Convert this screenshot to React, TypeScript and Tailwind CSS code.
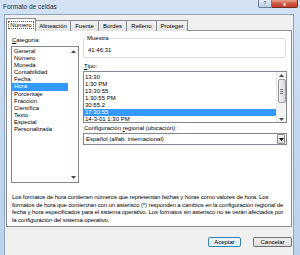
import React from "react";

const categories = [
  "General",
  "Número",
  "Moneda",
  "Contabilidad",
  "Fecha",
  "Hora",
  "Porcentaje",
  "Fracción",
  "Científica",
  "Texto",
  "Especial",
  "Personalizada",
];

const types = [
  "13:30",
  "1:30 PM",
  "13:30:55",
  "1:30:55 PM",
  "30:55.2",
  "17:30:55",
  "14-3-01 1:30 PM",
];

const tabs = [
  { label: "Número", w: "w-[30px]" },
  { label: "Alineación", w: "w-[36px]" },
  { label: "Fuente", w: "w-[29px]" },
  { label: "Bordes", w: "w-[29px]" },
  { label: "Relleno", w: "w-[31px]" },
  { label: "Proteger", w: "w-[32px]" },
];

const ArrowUp = () => (
  <svg width="5" height="3" viewBox="0 0 5 3">
    <path d="M0 3 L2.5 0 L5 3 Z" fill="#4d4d4d" />
  </svg>
);

const ArrowDown = () => (
  <svg width="5" height="3" viewBox="0 0 5 3">
    <path d="M0 0 L2.5 3 L5 0 Z" fill="#4d4d4d" />
  </svg>
);

const App = () => {
  return (
    <div className="w-[300px] h-[255px] overflow-hidden bg-gradient-to-b from-[#d3e3f4] via-[#c3d7ee] to-[#bcd2ec] flex flex-col font-['Liberation_Sans',Arial,sans-serif] text-[6px] leading-[7px] text-black">
      {/* title bar */}
      <div className="h-[14px] flex items-start shrink-0">
        <span className="pl-[3px] pt-[3px] text-[6.5px] text-[#1e2b3c]">
          Formato de celdas
        </span>
        <div className="ml-auto mr-[2px] flex">
          <div className="w-[14px] h-[8px] rounded-bl-[2px] border border-t-0 border-[#6d7f98] bg-gradient-to-b from-[#e6eef8] to-[#bccde2] flex items-center justify-center text-[5px] leading-[5px] text-[#3d4c60]">
            ?
          </div>
          <div className="w-[26px] h-[8px] rounded-br-[2px] border border-l-0 border-t-0 border-[#7a2c24] bg-gradient-to-b from-[#e8a493] via-[#cf5a45] to-[#c43c28] flex items-center justify-center text-[6px] leading-[6px] text-white font-bold">
            x
          </div>
        </div>
      </div>

      {/* client area */}
      <div className="flex-1 ml-[4px] mr-[6px] bg-[#f0f0f0] border-l border-t border-r border-[#8fa6c2] pl-[1px] pr-[1px] pt-[3px] flex flex-col">
        {/* tabs */}
        <div className="flex items-end h-[13px] relative z-10">
          {tabs.map((t, i) =>
            i === 0 ? (
              <div
                key={t.label}
                className={`${t.w} h-[13px] bg-white border border-b-0 border-[#898c95] flex items-center justify-center`}
              >
                <span className="border border-dotted border-[#555] px-[1px] leading-[6px]">
                  {t.label}
                </span>
              </div>
            ) : (
              <div
                key={t.label}
                className={`${t.w} h-[11px] -ml-px bg-gradient-to-b from-[#f2f2f2] to-[#e3e3e3] border border-b-0 border-[#898c95] flex items-center justify-center`}
              >
                {t.label}
              </div>
            ),
          )}
        </div>

        {/* panel */}
        <div className="h-[197px] -mt-px bg-white border border-[#898c95] flex flex-col px-[4px]">
          <div className="flex gap-[4px] pt-[6px]">
            {/* categories */}
            <div className="w-[68px] flex flex-col">
              <span className="h-[9px] pl-[1px]">
                <u>C</u>ategoría:
              </span>
              <div className="h-[137px] border border-[#828790] flex">
                <div className="flex-1 flex flex-col pt-[1px]">
                  {categories.map((c) => (
                    <div
                      key={c}
                      className={`h-[7.1px] pl-[2px] leading-[7px] ${
                        c === "Hora" ? "bg-[#3399ff] text-white" : ""
                      }`}
                    >
                      {c}
                    </div>
                  ))}
                </div>
                <div className="w-[10px] flex flex-col items-center justify-between py-[3px]">
                  <ArrowUp />
                  <ArrowDown />
                </div>
              </div>
            </div>

            {/* right column */}
            <div className="flex-1 flex flex-col">
              <div className="relative h-[20px] mt-[1px] border border-[#dcdcdc] rounded-[2px] mr-[1px]">
                <span className="absolute -top-[4px] left-[2px] bg-white px-[1px]">
                  Muestra
                </span>
                <span className="absolute top-[8px] left-[4px]">41:46:31</span>
              </div>

              <span className="mt-[5px] h-[8px] pl-[1px]">
                <u>T</u>ipo:
              </span>
              <div className="h-[52px] border border-[#828790] flex">
                <div className="flex-1 flex flex-col pt-[2px]">
                  {types.map((t) => (
                    <div
                      key={t}
                      className={`h-[7px] pl-[1px] leading-[7px] ${
                        t === "17:30:55" ? "bg-[#3399ff] text-white" : ""
                      }`}
                    >
                      {t}
                    </div>
                  ))}
                </div>
                <div className="w-[10px] flex flex-col items-center bg-[#f4f4f4] border-l border-[#e8e8e8]">
                  <div className="h-[6px] flex items-center">
                    <ArrowUp />
                  </div>
                  <div className="w-[8px] h-[24px] mt-[1px] rounded-[2px] border border-[#9a9a9a] bg-gradient-to-r from-[#f0f0f0] to-[#dadada] flex items-center justify-center">
                    <div className="flex flex-col gap-[1px]">
                      <div className="w-[3px] h-px bg-[#777]" />
                      <div className="w-[3px] h-px bg-[#777]" />
                      <div className="w-[3px] h-px bg-[#777]" />
                    </div>
                  </div>
                  <div className="mt-auto h-[6px] flex items-center">
                    <ArrowDown />
                  </div>
                </div>
              </div>

              <span className="mt-[2px] h-[8px] pl-[1px]">
                Configuración <u>r</u>egional (ubicación):
              </span>
              <div className="h-[12px] border border-[#828790] flex items-center">
                <span className="flex-1 pl-[2px]">
                  Español (alfab. internacional)
                </span>
                <div className="w-[8px] h-[10px] mr-px border border-[#8a8a8a] rounded-[1px] bg-gradient-to-b from-[#f4f4f4] to-[#d8d8d8] flex items-center justify-center">
                  <svg width="5" height="3" viewBox="0 0 5 3">
                    <path d="M0 0 L2.5 3 L5 0 Z" fill="#000" />
                  </svg>
                </div>
              </div>
            </div>
          </div>

          <p className="mt-[11px] pl-[1px] w-[276px] tracking-[-0.12px] leading-[7.5px]">
            Los formatos de hora contienen números que representan fechas y
            horas como valores de hora. Los formatos de hora que comienzan con
            un asterisco (*) responden a cambios en la configuración regional
            de fecha y hora especificados para el sistema operativo. Los
            formatos sin asterisco no se verán afectados por la configuración
            del sistema operativo.
          </p>
        </div>

        {/* buttons */}
        <div className="flex justify-end gap-[12px] mt-[10px]">
          <button className="w-[33px] h-[10px] rounded-[2px] border border-[#3c7fb1] bg-gradient-to-b from-[#eaf6fd] to-[#d9f0fc] text-[6px] leading-[6px]">
            Aceptar
          </button>
          <button className="w-[39px] h-[10px] rounded-[2px] border border-[#707070] bg-gradient-to-b from-[#f2f2f2] to-[#dddddd] text-[6px] leading-[6px]">
            Cancelar
          </button>
        </div>
      </div>
    </div>
  );
};

export default App;
